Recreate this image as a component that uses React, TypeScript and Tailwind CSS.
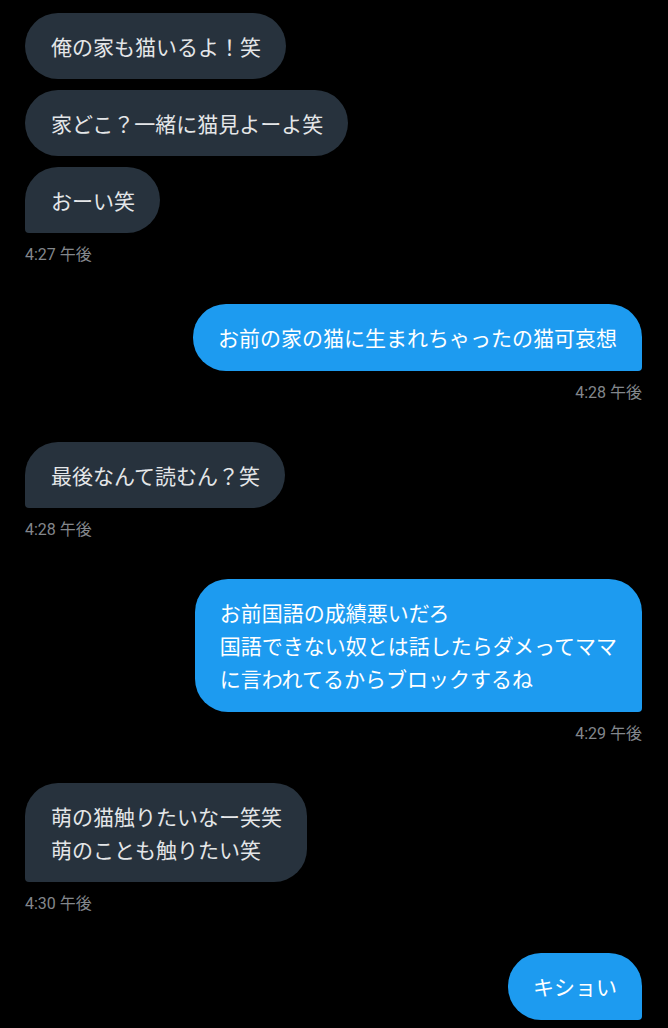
import React from "react";

const font = { fontFamily: '"Noto Sans CJK JP", "Noto Sans", sans-serif' };

function Recv({ lines, tail = false, first = false }: { lines: string[]; tail?: boolean; first?: boolean }) {
  return (
    <div className={`flex justify-start ${first ? "" : "mt-[11px]"}`}>
      <div
        className={`bg-[#27323d] text-[#e4e6e8] text-[21px] leading-[33px] py-[16.5px] pl-[26px] pr-[25px] whitespace-nowrap rounded-[33px] ${
          tail ? "rounded-bl-[4px]" : ""
        }`}
      >
        {lines.map((l, i) => (
          <div key={i}>{l}</div>
        ))}
      </div>
    </div>
  );
}

function Sent({ lines }: { lines: string[] }) {
  return (
    <div className="flex justify-end">
      <div className="bg-[#1d9bf0] text-white text-[21px] leading-[33px] py-[17px] pl-[25px] pr-[25px] whitespace-nowrap rounded-[33px] rounded-br-[4px]">
        {lines.map((l, i) => (
          <div key={i}>{l}</div>
        ))}
      </div>
    </div>
  );
}

function Time({ t, right = false }: { t: string; right?: boolean }) {
  return (
    <div
      className={`mt-[12px] mb-[39px] text-[16px] leading-[20px] text-[#83878c] ${right ? "text-right" : "text-left"}`}
      style={{ fontFamily: 'Roboto, "Noto Sans CJK JP", sans-serif' }}
    >
      {t}
    </div>
  );
}

export default function App() {
  return (
    <div className="w-[668px] h-[1028px] bg-black overflow-hidden pt-[13px] pl-[25px] pr-[26px]" style={font}>
      <Recv first lines={["俺の家も猫いるよ！笑"]} />
      <Recv lines={["家どこ？一緒に猫見よーよ笑"]} />
      <Recv tail lines={["おーい笑"]} />
      <Time t="4:27 午後" />
      <Sent lines={["お前の家の猫に生まれちゃったの猫可哀想"]} />
      <Time t="4:28 午後" right />
      <Recv first tail lines={["最後なんて読むん？笑"]} />
      <Time t="4:28 午後" />
      <Sent lines={["お前国語の成績悪いだろ", "国語できない奴とは話したらダメってママ", "に言われてるからブロックするね"]} />
      <Time t="4:29 午後" right />
      <Recv first tail lines={["萌の猫触りたいなー笑笑", "萌のことも触りたい笑"]} />
      <Time t="4:30 午後" />
      <Sent lines={["キショい"]} />
    </div>
  );
}
